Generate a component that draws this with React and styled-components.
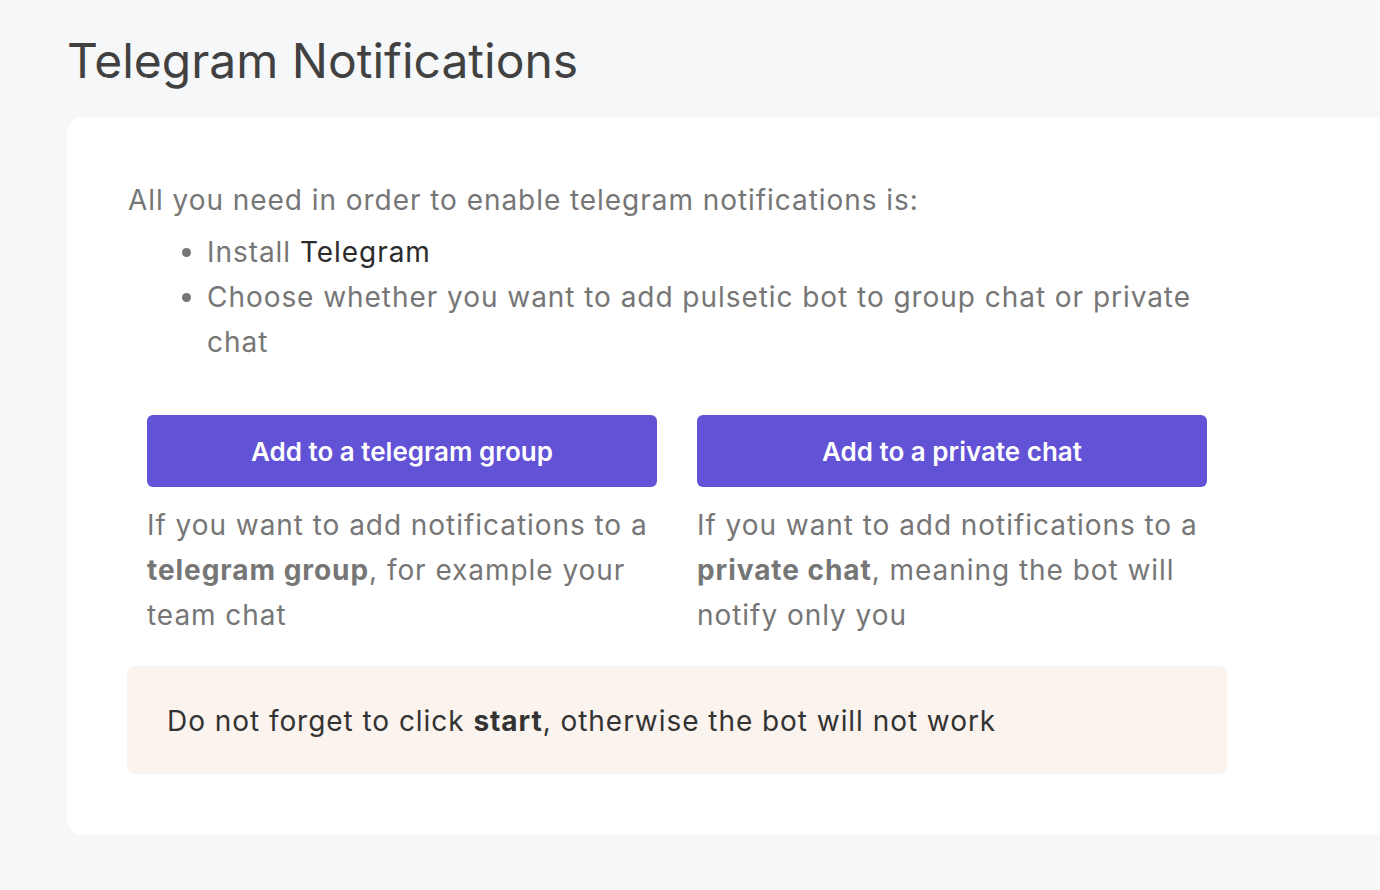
import React from "react";
import styled, { createGlobalStyle } from "styled-components";

const Global = createGlobalStyle`
  html, body { margin: 0; padding: 0; }
  body {
    background: #f6f7f9;
    font-family: Inter, "Noto Sans", sans-serif;
    overflow: hidden;
    width: 1380px;
    height: 890px;
  }
`;

const Page = styled.main`
  padding: 32px 0 0 67px;
`;

const Title = styled.h1`
  margin: 0 0 27px 0;
  font-size: 48px;
  font-weight: 400;
  line-height: 58px;
  color: #414141;
`;

const Card = styled.section`
  width: 1400px;
  box-sizing: border-box;
  background: #ffffff;
  border-radius: 16px;
  padding: 61px 60px 61px;
`;

const Content = styled.div`
  width: 1100px;
  font-size: 28px;
  line-height: 45px;
  letter-spacing: 0.95px;
  color: #767676;
`;

const Intro = styled.p`
  margin: 0 0 7px 1px;
`;

const List = styled.ul`
  margin: 0 0 50px;
  padding-left: 80px;
  li::marker { color: #767676; }
`;

const Strong = styled.span`
  color: #2b2b2b;
`;

const Options = styled.div`
  display: grid;
  grid-template-columns: 1fr 1fr;
  gap: 40px;
  padding: 0 20px;
`;

const Option = styled.div`
  display: flex;
  flex-direction: column;
`;

const Button = styled.button`
  height: 72px;
  border: none;
  border-radius: 6px;
  background: #6152d6;
  color: #ffffff;
  font-family: inherit;
  font-size: 26px;
  font-weight: 600;
  letter-spacing: 0;
  cursor: pointer;
  margin-bottom: 16px;
`;

const Desc = styled.p`
  margin: 0;
  b { font-weight: 700; }
`;

const Alert = styled.div`
  margin-top: 28px;
  background: #fbf3ee;
  border-radius: 8px;
  padding: 33px 40px 31px;
  line-height: 44px;
  color: #333333;
  b { font-weight: 700; }
`;

export default function App() {
  return (
    <>
      <Global />
      <Page>
        <Title>Telegram Notifications</Title>
        <Card>
          <Content>
            <Intro>All you need in order to enable telegram notifications is:</Intro>
            <List>
              <li>
                Install <Strong>Telegram</Strong>
              </li>
              <li>Choose whether you want to add pulsetic bot to group chat or private chat</li>
            </List>
            <Options>
              <Option>
                <Button>Add to a telegram group</Button>
                <Desc>
                  If you want to add notifications to a <b>telegram group</b>, for example your team chat
                </Desc>
              </Option>
              <Option>
                <Button>Add to a private chat</Button>
                <Desc>
                  If you want to add notifications to a <b>private chat</b>, meaning the bot will notify only you
                </Desc>
              </Option>
            </Options>
            <Alert>
              Do not forget to click <b>start</b>, otherwise the bot will not work
            </Alert>
          </Content>
        </Card>
      </Page>
    </>
  );
}
